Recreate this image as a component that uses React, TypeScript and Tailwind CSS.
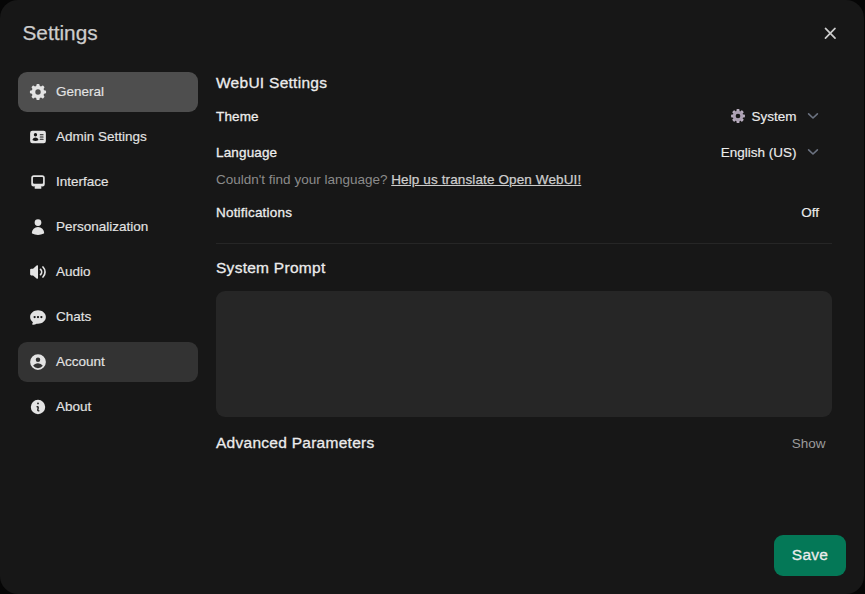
import type { ReactNode } from "react";
import {
  HiMiniCog8Tooth,
  HiIdentification,
  HiUser,
  HiMiniInformationCircle,
} from "react-icons/hi2";

const Icon16 = ({ d }: { d: string }) => (
  <svg viewBox="0 0 16 16" fill="currentColor" className="size-[18px]">
    <path fillRule="evenodd" clipRule="evenodd" d={d} />
  </svg>
);

const desktop =
  "M2 4.25A2.25 2.25 0 0 1 4.25 2h7.5A2.25 2.25 0 0 1 14 4.25v5.5A2.25 2.25 0 0 1 11.75 12h-1.312c.1.128.21.248.328.36a.75.75 0 0 1 .234.545v.345a.75.75 0 0 1-.75.75h-4.5a.75.75 0 0 1-.75-.75v-.345a.75.75 0 0 1 .234-.545c.118-.111.228-.232.328-.36H4.25A2.25 2.25 0 0 1 2 9.75v-5.5Zm2.25-.75a.75.75 0 0 0-.75.75v4.5c0 .414.336.75.75.75h7.5a.75.75 0 0 0 .75-.75v-4.5a.75.75 0 0 0-.75-.75h-7.5Z";
const speaker =
  "M7.557 2.066A.75.75 0 0 1 8 2.75v10.5a.75.75 0 0 1-1.248.56L3.59 11H2a1 1 0 0 1-1-1V6a1 1 0 0 1 1-1h1.59l3.162-2.81a.75.75 0 0 1 .805-.124ZM12.95 3.05a.75.75 0 1 0-1.06 1.06 5.5 5.5 0 0 1 0 7.78.75.75 0 1 0 1.06 1.06 7 7 0 0 0 0-9.9ZM10.828 5.172a.75.75 0 1 0-1.06 1.06 2.5 2.5 0 0 1 0 3.536.75.75 0 1 0 1.06 1.06 4 4 0 0 0 0-5.656Z";
const chat =
  "M8 2C4.262 2 1 4.57 1 8c0 1.86.98 3.486 2.455 4.566a3.472 3.472 0 0 1-.469 1.26.75.75 0 0 0 .713 1.14 6.961 6.961 0 0 0 3.06-1.06c.403.062.818.094 1.241.094 3.738 0 7-2.57 7-6s-3.262-6-7-6ZM5 9a1 1 0 1 0 0-2 1 1 0 0 0 0 2Zm7-1a1 1 0 1 1-2 0 1 1 0 0 1 2 0ZM8 9a1 1 0 1 0 0-2 1 1 0 0 0 0 2Z";
const account =
  "M15 8A7 7 0 1 1 1 8a7 7 0 0 1 14 0Zm-5-2a2 2 0 1 1-4 0 2 2 0 0 1 4 0ZM8 9c-1.825 0-3.422.977-4.295 2.437A5.49 5.49 0 0 0 8 13.5a5.49 5.49 0 0 0 4.294-2.063A4.997 4.997 0 0 0 8 9Z";

const tabs: { label: string; icon: ReactNode; bg: string }[] = [
  { label: "General", icon: <HiMiniCog8Tooth className="size-[18px]" />, bg: "bg-[#4e4e4e]" },
  { label: "Admin Settings", icon: <HiIdentification className="size-[18px]" />, bg: "" },
  { label: "Interface", icon: <Icon16 d={desktop} />, bg: "" },
  { label: "Personalization", icon: <HiUser className="size-[18px]" />, bg: "" },
  { label: "Audio", icon: <Icon16 d={speaker} />, bg: "" },
  { label: "Chats", icon: <Icon16 d={chat} />, bg: "" },
  { label: "Account", icon: <Icon16 d={account} />, bg: "bg-[#333333]" },
  { label: "About", icon: <HiMiniInformationCircle className="size-[18px]" />, bg: "" },
];

const Chevron = () => (
  <svg viewBox="0 0 12 8" fill="none" stroke="#6b7280" strokeWidth="1.6" strokeLinecap="round" strokeLinejoin="round" className="-mt-0.5 h-2 w-3">
    <path d="M1.6 1.8 6 6l4.4-4.2" />
  </svg>
);

const teeth = [0, 45, 90, 135, 180, 225, 270, 315];

const Gear = () => (
  <svg viewBox="0 0 14 14" className="-mt-[2px] size-3.5">
    {teeth.map((a) => (
      <rect key={a} x="5.5" y="0.1" width="3" height="3" rx="0.7" fill="#b9aebf" transform={`rotate(${a} 7 7)`} />
    ))}
    <circle cx="7" cy="7" r="3.8" fill="none" stroke="#aca0b3" strokeWidth="2.9" />
  </svg>
);

const label = "font-medium tracking-[0.15px] [-webkit-text-stroke:0.3px_currentColor]";
const heading = "text-[15.5px] leading-[22px] font-medium tracking-[0.27px] [-webkit-text-stroke:0.3px_currentColor]";

export default function App() {
  return (
    <div className="h-[594px] w-[865px] overflow-hidden bg-[#060606] pr-px font-['Liberation_Sans',Arial,sans-serif] text-[13.5px] leading-[18px] text-[#ececec]">
      <div className="flex h-[594px] flex-col rounded-[18px] bg-[#171717]">
        <header className="flex h-[72px] items-start justify-between pt-[20px] pr-[22.5px] pl-[22.5px]">
          <h1 className="-mt-px text-[20.8px] leading-[27px] text-[#cdcdcd] [-webkit-text-stroke:0.25px_currentColor]">Settings</h1>
          <svg viewBox="0 0 20 20" fill="currentColor" className="mt-[2px] size-[22.5px] text-[#cdcdcd]">
            <path d="M6.28 5.22a.75.75 0 0 0-1.06 1.06L8.94 10l-3.72 3.72a.75.75 0 1 0 1.06 1.06L10 11.06l3.72 3.72a.75.75 0 1 0 1.06-1.06L11.06 10l3.72-3.72a.75.75 0 0 0-1.06-1.06L10 8.94 6.28 5.22Z" />
          </svg>
        </header>
        <div className="flex flex-1 pl-[18px]">
          <nav className="flex w-[180px] flex-col gap-[5px]">
            {tabs.map((t) => (
              <button key={t.label} className={`flex h-10 items-center gap-[9px] rounded-[9px] pl-[11px] text-[#e3e3e3] ${t.bg}`}>
                {t.icon}
                <span className="-mt-px [-webkit-text-stroke:0.15px_currentColor]">{t.label}</span>
              </button>
            ))}
          </nav>
          <main className="ml-[18px] flex w-[616px] flex-col">
            <h2 className={heading}>WebUI Settings</h2>
            <div className="mt-[14px] flex items-center justify-between pr-[13px]">
              <span className={label}>Theme</span>
              <div className="flex items-center">
                <Gear />
                <span className="mr-[10.5px] ml-[6px] [-webkit-text-stroke:0.15px_currentColor]">System</span>
                <Chevron />
              </div>
            </div>
            <div className="mt-[18px] flex items-center justify-between pr-[13px]">
              <span className={label}>Language</span>
              <div className="flex items-center">
                <span className="mr-[10.5px] [-webkit-text-stroke:0.15px_currentColor]">English (US)</span>
                <Chevron />
              </div>
            </div>
            <p className="mt-[9px] text-[#8b8b8b]">
              Couldn't find your language?{" "}
              <a className="font-medium tracking-[0.12px] text-[#cdcdcd] underline [-webkit-text-stroke:0.25px_currentColor]">Help us translate Open WebUI!</a>
            </p>
            <div className="mt-[15px] flex items-center justify-between pr-[13px]">
              <span className="font-medium tracking-[0.2px] [-webkit-text-stroke:0.3px_currentColor]">Notifications</span>
              <span className="[-webkit-text-stroke:0.15px_currentColor]">Off</span>
            </div>
            <hr className="mt-[21px] border-[#262626]" />
            <h2 className={`mt-[13px] ${heading}`}>System Prompt</h2>
            <div className="mt-[12px] h-[126px] rounded-[9px] bg-[#262626]" />
            <div className="mt-[15px] flex items-center justify-between pr-[6.5px]">
              <h2 className={heading}>Advanced Parameters</h2>
              <span className="mt-[2px] text-[#9b9b9b]">Show</span>
            </div>
          </main>
        </div>
        <footer className="flex justify-end pr-[18px] pb-[18px]">
          <button className="h-[41px] w-[72px] rounded-[9px] bg-[#047857] pb-[2px] text-[15.5px] tracking-[0.27px] text-[#ececec] [-webkit-text-stroke:0.3px_currentColor]">Save</button>
        </footer>
      </div>
    </div>
  );
}
